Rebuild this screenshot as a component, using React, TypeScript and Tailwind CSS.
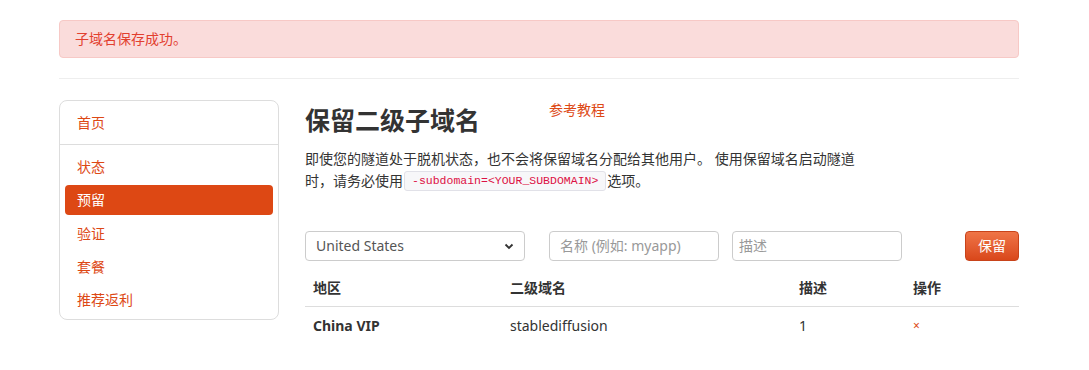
import React from "react";

const font = { fontFamily: '"Noto Sans", "Noto Sans CJK SC", sans-serif' };

export default function App() {
  const nav = ["状态", "预留", "验证", "套餐", "推荐返利"];
  return (
    <div className="w-[1089px] h-[370px] bg-white text-[14px] text-[#333] leading-[20px] font-['Noto_Sans','Noto_Sans_CJK_SC',sans-serif]" style={font}>
      <div className="w-[960px] ml-[59px] pt-[20px]">
        <div className="h-[38px] rounded-[4px] border border-[#f7c9c6] bg-[#fadcdb] text-[#e2402f] flex items-center px-[15px]">
          子域名保存成功。
        </div>
        <div className="mt-[20px] border-t border-[#eeeeee]" />
        <div className="flex mt-[21px]">
          <div className="w-[220px] h-[220px] border border-[#dddddd] rounded-[8px] shrink-0">
            <div className="h-[44px] flex items-center px-[17px] border-b border-[#dddddd] text-[#dd4814]">首页</div>
            <div className="flex flex-col gap-[3.3px] px-[5px] pt-[7px]">
              {nav.map((n) =>
                n === "预留" ? (
                  <div key={n} className="h-[30px] rounded-[4px] bg-[#dd4814] text-white flex items-center px-[12px]">{n}</div>
                ) : (
                  <div key={n} className="h-[30px] flex items-center px-[12px] text-[#dd4814]">{n}</div>
                )
              )}
            </div>
          </div>
          <div className="ml-[26px] w-[714px]">
            <div className="flex">
              <h1 className="w-[244px] text-[25px] font-bold leading-[30px] mt-[5px] text-[#333]">保留二级子域名</h1>
              <a className="text-[#dd4814] leading-[20px]">参考教程</a>
            </div>
            <div className="mt-[14px] w-[560px]">
              <div className="h-[21px] leading-[20px]">即使您的隧道处于脱机状态，也不会将保留域名分配给其他用户。 使用保留域名启动隧道</div>
              <div className="flex items-center h-[22px]">
                <span>时，请务必使用</span>
                <code className="ml-[1px] mr-[1px] px-[7px] h-[20px] flex items-center text-[11.5px] text-[#dd1144] bg-[#f7f7f9] border border-[#e1e1e8] rounded-[3px] font-['Liberation_Mono',monospace]">-subdomain=&lt;YOUR_SUBDOMAIN&gt;</code>
                <span>选项。</span>
              </div>
            </div>
            <div className="flex items-center mt-[39px] h-[30px]">
              <div className="relative w-[220px] h-[30px] border border-[#cccccc] rounded-[4px] flex items-center px-[10px] text-[#555]">
                United States
                <svg className="absolute right-[10px] top-[11px]" width="10" height="7" viewBox="0 0 10 7">
                  <path d="M1.5 1.5 L5 5 L8.5 1.5" stroke="#333" strokeWidth="1.8" fill="none" />
                </svg>
              </div>
              <div className="ml-[24px] w-[170px] h-[30px] border border-[#cccccc] rounded-[4px] flex items-center px-[10px] text-[#999]">名称 (例如: myapp)</div>
              <div className="ml-[13px] w-[170px] h-[30px] border border-[#cccccc] rounded-[4px] flex items-center px-[6px] text-[#999]">描述</div>
              <button className="ml-auto w-[54px] h-[30px] rounded-[4px] text-white bg-gradient-to-b from-[#ef7446] to-[#d9471a] border border-[#c8431a] flex items-center justify-center">保留</button>
            </div>
            <div className="mt-[9px]">
              <div className="flex h-[37px] items-center font-bold border-b border-[#dddddd]">
                <div className="w-[197px] pl-[8px]">地区</div>
                <div className="w-[289px] pl-[8px]">二级域名</div>
                <div className="w-[114px] pl-[8px]">描述</div>
                <div className="pl-[8px]">操作</div>
              </div>
              <div className="flex h-[37px] items-center">
                <div className="w-[197px] pl-[8px] font-bold">China VIP</div>
                <div className="w-[289px] pl-[8px]">stablediffusion</div>
                <div className="w-[114px] pl-[8px]">1</div>
                <div className="pl-[8px] text-[#dd4814] text-[12px]">×</div>
              </div>
            </div>
          </div>
        </div>
      </div>
    </div>
  );
}
